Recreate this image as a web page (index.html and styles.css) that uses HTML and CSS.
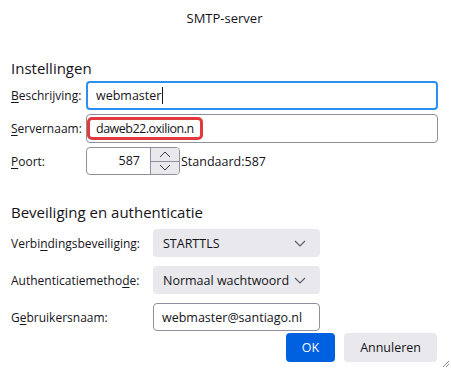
FILE: index.html
```html
<!DOCTYPE html>
<html>
<head>
<meta charset="utf-8">
<link rel="stylesheet" href="styles.css">
</head>
<body>
<div class="dialog">
  <div class="title">SMTP-server</div>

  <section class="section first">
    <h2 class="heading">Instellingen</h2>
    <div class="grid grid-settings">
      <label class="label"><u>B</u>eschrijving:</label>
      <div class="input focused"><span>webmaster</span><span class="caret"></span></div>

      <label class="label"><u>S</u>ervernaam:</label>
      <div class="input server"><span class="server-text">daweb22.oxilion.n</span><span class="highlight"></span></div>

      <label class="label"><u>P</u>oort:</label>
      <div class="port-row">
        <div class="spin">
          <span class="spin-value">587</span>
          <div class="spin-buttons">
            <div class="spin-btn up"><svg width="12" height="7" viewBox="0 0 12 7"><path d="M1 6 L6 1 L11 6" fill="none" stroke="#3a3a44" stroke-width="1"/></svg></div>
            <div class="spin-btn down"><svg width="12" height="7" viewBox="0 0 12 7"><path d="M1 1 L6 6 L11 1" fill="none" stroke="#3a3a44" stroke-width="1"/></svg></div>
          </div>
        </div>
        <span class="default">Standaard:587</span>
      </div>
    </div>
  </section>

  <section class="section second">
    <h2 class="heading">Beveiliging en authenticatie</h2>
    <div class="grid grid-security">
      <label class="label">Verbi<u>n</u>dingsbeveiliging:</label>
      <div class="select"><span>STARTTLS</span><svg class="chev" width="12" height="7" viewBox="0 0 12 7"><path d="M1 1 L6 6 L11 1" fill="none" stroke="#5b5b66" stroke-width="1.2"/></svg></div>

      <label class="label">Authenticatiemetho<u>d</u>e:</label>
      <div class="select"><span>Normaal wachtwoord</span><svg class="chev" width="12" height="7" viewBox="0 0 12 7"><path d="M1 1 L6 6 L11 1" fill="none" stroke="#5b5b66" stroke-width="1.2"/></svg></div>

      <label class="label">G<u>e</u>bruikersnaam:</label>
      <div class="input small"><span>webmaster@santiago.nl</span></div>
    </div>
  </section>

  <div class="buttons">
    <div class="btn primary">OK</div>
    <div class="btn">Annuleren</div>
  </div>

  <svg class="grip" width="10" height="10" viewBox="0 0 10 10"><path d="M9 3 L3 9 M9 6 L6 9" stroke="#8a8a8a" stroke-width="1"/></svg>
</div>
</body>
</html>
```

FILE: styles.css
```css
html, body {
  margin: 0;
  padding: 0;
  background: #ffffff;
}

body {
  width: 451px;
  height: 369px;
  overflow: hidden;
  font-family: "Open Sans", "Noto Sans", sans-serif;
  font-size: 12px;
  color: #15141a;
}

.dialog {
  position: relative;
  height: 369px;
  box-sizing: border-box;
  padding: 0 13px 0 11px;
}

.title {
  text-align: center;
  font-size: 13px;
  line-height: 18px;
  padding-top: 9px;
  height: 27px;
}

.heading {
  margin: 0;
  font-size: 15px;
  font-weight: 400;
  line-height: 20px;
}

.section.first {
  margin-top: 22px;
}

.section.first .heading {
  margin-bottom: 3px;
}

.section.second {
  margin-top: 27px;
}

.section.second .heading {
  margin-bottom: 7px;
}

.grid {
  display: grid;
  align-items: center;
}

.grid-settings {
  grid-template-columns: 75px 352px;
  row-gap: 4px;
}

.grid-security {
  grid-template-columns: 142px 167px;
  row-gap: 9px;
}

.label u {
  text-decoration-thickness: 1px;
  text-underline-offset: 2px;
}

.input {
  position: relative;
  box-sizing: border-box;
  height: 29px;
  border: 1px solid #8f8f9d;
  border-radius: 4px;
  padding: 0 9px;
  display: flex;
  align-items: center;
  font-size: 12.5px;
  background: #fff;
}

.input.focused {
  border: 2px solid #2a8ff0;
  padding: 0 8px;
}

.caret {
  display: inline-block;
  width: 1px;
  height: 17px;
  background: #15141a;
  margin-left: 1px;
}

.server-text {
  letter-spacing: -0.5px;
}

.highlight {
  position: absolute;
  left: 0px;
  top: 2px;
  width: 116px;
  height: 23px;
  border: 3px solid #e0393e;
  border-radius: 5px;
  box-sizing: border-box;
}

.port-row {
  display: flex;
  align-items: center;
}

.spin {
  box-sizing: border-box;
  flex: 0 0 94px;
  width: 94px;
  height: 28px;
  border: 1px solid #8f8f9d;
  border-radius: 4px;
  display: flex;
  align-items: stretch;
  font-size: 12.5px;
}

.spin-value {
  flex: 1;
  text-align: right;
  padding-right: 10px;
  line-height: 26px;
}

.spin-buttons {
  width: 28px;
  display: flex;
  flex-direction: column;
  border-left: 1px solid #8f8f9d;
}

.spin-btn {
  flex: 1;
  background: #e9e9ed;
  display: flex;
  align-items: center;
  justify-content: center;
}

.spin-btn.up {
  border-bottom: 1px solid #8f8f9d;
  border-top-right-radius: 3px;
}

.spin-btn.down {
  border-bottom-right-radius: 3px;
}

.default {
  margin-left: 1px;
  font-size: 12.5px;
}

.select {
  box-sizing: border-box;
  height: 28px;
  background: #e9e9ed;
  border-radius: 4px;
  display: flex;
  align-items: center;
  justify-content: space-between;
  padding: 0 14px 0 10px;
  font-size: 12.5px;
}

.chev {
  display: block;
}

.input.small {
  height: 28px;
  padding: 0 8px;
}

.buttons {
  display: flex;
  justify-content: flex-end;
  gap: 9px;
  margin-top: 2px;
  margin-right: 1px;
}

.btn {
  box-sizing: border-box;
  height: 29px;
  padding: 0 16px;
  min-width: 49px;
  border-radius: 4px;
  background: #e9e9ed;
  display: flex;
  align-items: center;
  justify-content: center;
  font-size: 12.5px;
}

.btn.primary {
  background: #0061e0;
  color: #fbfbfe;
}

.grip {
  position: absolute;
  right: 1px;
  bottom: 1px;
}
```
